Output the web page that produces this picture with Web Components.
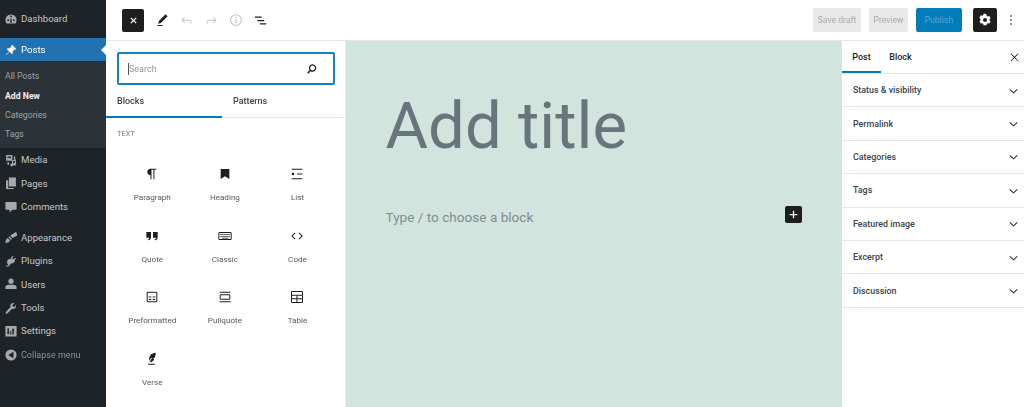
<!DOCTYPE html>
<html>
<head>
<meta charset="utf-8">
<title>Add New Post</title>
<style>
  html, body { margin: 0; padding: 0; height: 407px; overflow: hidden; background: #fff; font-family: Roboto, "Liberation Sans", sans-serif; }
</style>
</head>
<body>
<wp-editor></wp-editor>

<script>
// icons, all on a 24x24 box unless a menu icon (20x20)
const icons = {
  dashboard: '<path d="M10 3.5a8 8 0 0 0-8 8c0 1.800.6 3.500 1.600 4.800h12.800A8 8 0 0 0 18 11.500a8 8 0 0 0-8-8zM6 13a1.300 1.300 0 1 1 0-2.600A1.300 1.300 0 0 1 6 13zm2.600 2l.9-6h1l.9 6zM14 13a1.300 1.300 0 1 1 0-2.600A1.300 1.300 0 0 1 14 13zM10 7.500A1.300 1.300 0 1 1 10 4.900a1.300 1.300 0 0 1 0 2.600z" fill-rule="evenodd"/>',
  pin: '<path d="M11.500 2.500l6 6-1.200 1.200-1-.5-3 3c.5 1.500.2 3-.8 4L8 12.500 3.500 17 3 16.500 7.500 12 3.800 8.500c1-1 2.500-1.300 4-.8l3-3-.5-1z"/>',
  media: '<path d="M3 3h9v8H3zm2 2v3l2-1.500L9 8l1-1V5zM14 5h2v4h-2zM5 13h2v4H5zM13 10l4-1v7a2 2 0 1 1-1.500-1.800V11l-2.500.6v5.400a2 2 0 1 1-1.500-1.800V11z"/>',
  pages: '<path d="M7 2h10v13H7zM3 6h3v11h8v1.500H3z"/>',
  comment: '<path d="M3 3h14a1 1 0 0 1 1 1v9a1 1 0 0 1-1 1h-5l-4 4v-4H3a1 1 0 0 1-1-1V4a1 1 0 0 1 1-1z"/>',
  appearance: '<path d="M17.500 2.500l1.500 5.500-7 3.500-3-3.500zM7.800 8.800l3.400 3.700-1.400 1.700-3.600-3.800zM5.200 11.500l3.600 3.800C7 17.500 4.500 18.500 1.500 18.500c1.200-1.500 1-3.500 1.700-5z"/>',
  plugins: '<path d="M12 2.500l1.500 1-2 3 2 1.500 2.300-2.800 1.400 1.100-2.400 3 1 .8c-1 2.500-3.400 4-6 3.500L8 16c-.500 1-1.200 2-3.500 2H3v-1.500h1.500c1 0 1.500-.5 2-1.500l-2-1.500C4 10.500 5 8 7.500 6.800l1.300 1z"/>',
  users: '<circle cx="10" cy="6" r="3.700"/><path d="M2 17v-2.500c0-2 2-3.500 4.500-3.500h7c2.500 0 4.500 1.500 4.500 3.500V17z"/>',
  tools: '<path d="M17.500 5.500l-3 3-2-.5-.5-2 3-3c-2.500-.8-5 .2-5.700 2.700-.3 1-.2 1.900.1 2.700L3 15.500c-.8.800-.8 1.700-.2 2.300.6.600 1.500.6 2.300-.2l6.500-6.500c.8.300 1.700.4 2.700.1 2.500-.7 3.500-3.200 2.700-5.700z"/>',
  settings: '<path d="M2 3h16v15H2zm3 3v6H3.800l2.200 3 2.200-3H7V6zm8 0l-2.200 3H12v6h2V9h1.200zM9 10v5h1.500v-5z" fill-rule="evenodd"/>',
  collapse: '<path d="M10 2a8 8 0 1 0 0 16 8 8 0 0 0 0-16zm3.500 3.500v9L6 10z" fill-rule="evenodd"/>',
  close: '<path d="M13 11.800l6.100-6.100-1.100-1.100-6 6.100-6.100-6.100-1 1.100 6 6.100-6 6 1 1.100 6.100-6.100 6 6.100 1.100-1.100z"/>',
  closebold: '<path d="M14.300 12l6-6L18 3.700l-6 6-6-6L3.700 6l6 6-6 6L6 20.300l6-6 6 6 2.300-2.300z"/>',
  pencil: '<path d="M20.100 5.100L16.900 2 6.200 12.700l-1.300 4.400 4.500-1.300L20.100 5.100zM4 20.800h8v-1.500H4v1.500z"/>',
  undo: '<path d="M18.300 11.700c-.6-.6-1.400-.9-2.300-.9H6.700l2.900-3.300-1.100-1-4.500 5 4.500 5 1.100-1-2.900-3.300H16c.5 0 .9.200 1.300.5.900.9 1 1.800 1 2.700v1.800h1.500v-1.800c0-1.200-.3-2.600-1.500-3.700z"/>',
  redo: '<path d="M15.600 6.500l-1.100 1 2.900 3.300H8c-.9 0-1.700.3-2.300.9-1.200 1.100-1.500 2.500-1.500 3.700v1.800h1.500v-1.800c0-.9.100-1.800 1-2.700.4-.3.800-.5 1.300-.5h9.400l-2.900 3.300 1.100 1 4.500-5z"/>',
  info: '<path d="M12 3.200c-4.800 0-8.800 3.900-8.800 8.800 0 4.800 3.900 8.800 8.800 8.800 4.800 0 8.800-3.900 8.800-8.800 0-4.800-4-8.800-8.800-8.800zm0 16c-4 0-7.200-3.300-7.200-7.200C4.800 8 8 4.800 12 4.800s7.200 3.300 7.200 7.200c0 4-3.200 7.200-7.200 7.200zM11 17h2v-6h-2zm0-8h2V7h-2z"/>',
  listview: '<path d="M3 5.500h11v2H3zM7 11h11v2H7zM11 16.500h10v2H11z"/>',
  search: '<path d="M14 4a7 7 0 0 0-5.600 11.200L4 19.600 5.900 21.500l4.500-4.400A7 7 0 1 0 14 4zm0 2.500a4.500 4.500 0 1 1 0 9 4.500 4.500 0 0 1 0-9z" fill-rule="evenodd"/>',
  gear: '<path d="M12 2.500l2.200 1 .5 2.300 1.400.8 2.300-.7 2 3.300-1.700 1.600v1.600l1.700 1.600-2 3.400-2.300-.7-1.400.8-.5 2.300h-4.400l-.5-2.300-1.400-.8-2.300.7-2-3.400 1.700-1.600v-1.600L3.600 8.200l2-3.300 2.300.7 1.400-.8.500-2.300zM12 9a3 3 0 1 0 0 6 3 3 0 0 0 0-6z" fill-rule="evenodd"/>',
  dots: '<path d="M13 19h-2v-2h2v2zm0-6h-2v-2h2v2zm0-6h-2V5h2v2z"/>',
  plus: '<path d="M18 11h-5V6h-2v5H6v2h5v5h2v-5h5z"/>',
  chevron: '<path d="M17.500 9.500L12 14.600 6.500 9.500l-1 1.100L12 16.700l6.500-6.100z"/>',
  paragraph: '<path d="M18.300 4H9.900v-.1l-.9.2c-2.300.4-4 2.400-4 4.800s1.700 4.400 4 4.800l.7.100V20h1.500V5.500h2.900V20h1.500V5.500h2.700V4z"/>',
  heading: '<path d="M5.500 4.500h13v15L12 15.500l-6.500 4z"/>',
  list: '<path d="M4 4v1.500h16V4H4zm8 8.800h8v-1.500h-8v1.500zM4 20h16v-1.500H4V20zm0-8a2 2 0 1 0 4 0 2 2 0 1 0-4 0z"/>',
  quote: '<path d="M3.500 6h7v7.500c0 2.800-1.400 4.500-3.800 5l-.7-1.500c1.300-.4 2-1.200 2-2.500h-4.500zM13.500 6h7v7.500c0 2.800-1.400 4.500-3.800 5l-.7-1.500c1.300-.4 2-1.200 2-2.500h-4.500z"/>',
  classic: '<path d="M20 6H4c-1.100 0-2 .9-2 2v8c0 1.100.9 2 2 2h16c1.100 0 2-.9 2-2V8c0-1.100-.9-2-2-2zm.5 10a.5.500 0 0 1-.5.5H4a.5.500 0 0 1-.5-.5V8c0-.3.200-.5.500-.5h16c.3 0 .5.200.5.500zM5 9h2v1.500H5zm3 0h2v1.500H8zm3 0h2v1.500h-2zm3 0h2v1.500h-2zm3 0h2v1.500h-2zM5 12h2v1.500H5zm3 0h2v1.500H8zm3 0h2v1.500h-2zm3 0h2v1.500h-2zm3 0h2v1.500h-2zM7 14.800h10v1H7z" fill-rule="evenodd"/>',
  code: '<path d="M20.800 12l-5.500-5.200-1 1.100 4.300 4.100-4.300 4.100 1 1.100zM3.200 12l5.500 5.200 1-1.100L5.400 12l4.300-4.100-1-1.100z"/>',
  preformatted: '<path d="M18 4H6a2 2 0 0 0-2 2v12a2 2 0 0 0 2 2h12a2 2 0 0 0 2-2V6a2 2 0 0 0-2-2zm.5 14a.5.500 0 0 1-.5.5H6a.5.500 0 0 1-.5-.5V6c0-.3.200-.5.500-.5h12c.3 0 .5.200.5.500zM7 16.500h4V15H7zm6 0h4V15h-4zM7 12.800h4v-1.500H7zm6 0h4v-1.500h-4z" fill-rule="evenodd"/>',
  pullquote: '<path d="M4 4h16v1.500H4zM4 18.500h16V20H4zM18 8H6c-1.100 0-2 .9-2 2v4c0 1.100.9 2 2 2h12c1.100 0 2-.9 2-2v-4c0-1.100-.9-2-2-2zm.5 6c0 .3-.200.5-.5.5H6a.5.500 0 0 1-.5-.5v-4c0-.3.200-.5.500-.5h12c.3 0 .5.200.5.500z" fill-rule="evenodd"/>',
  table: '<path d="M19 3H5a2 2 0 0 0-2 2v14a2 2 0 0 0 2 2h14a2 2 0 0 0 2-2V5a2 2 0 0 0-2-2zM5 4.500h14c.3 0 .5.200.5.500v3.500h-15V5c0-.3.200-.5.500-.5zm6.200 15H5a.5.500 0 0 1-.5-.5v-3.500h6.700zm0-5.500H4.500v-4h6.700zm8.300 5c0 .3-.200.500-.5.500h-6.300v-4h6.800zm0-5h-6.800v-4h6.800z" fill-rule="evenodd"/>',
  verse: '<path d="M17.800 2.500c-3.500 0-8 1.500-9.500 6-.8 2.400-.6 4.700-.3 6.300L11 10l1 .6-3.700 6.100h1.200c3.500-.5 5.200-2.300 5.800-4.600l-2.300-.3 3-1.600c.8-2 1.500-4.500 1.800-7.700zM6 19h10v1.500H6z"/>'
};
const svg = (name, size, box = 24) => `<svg width="${size}" height="${size}" viewBox="0 0 ${box} ${box}" fill="currentColor" aria-hidden="true">${icons[name]}</svg>`;

class WpMenuItem extends HTMLElement {
  constructor() {
    super();
    this.attachShadow({ mode: 'open' }).innerHTML = `
      <style>
        :host { display: flex; align-items: center; height: 23.4px; color: #c4c8cb; font-size: 9.6px; }
        :host([kind=current]) { background: #2271b1; color: #fff; position: relative; }
        :host([kind=current])::after { content: ''; position: absolute; right: 0; top: 7px; border: 5px solid transparent; border-right-color: #fff; border-left: 0; }
        :host([kind=collapse]) { color: #8d9398; font-size: 9px; }
        span { width: 21px; padding-left: 1px; box-sizing: border-box; display: flex; justify-content: center; }
        svg { display: block; color: #a7aaad; }
        :host([kind=current]) svg { color: #fff; }
      </style>
      <span>${svg(this.getAttribute('icon'), 14, 20)}</span><slot></slot>`;
  }
}

class WpAdminMenu extends HTMLElement {
  constructor() {
    super();
    this.attachShadow({ mode: 'open' }).innerHTML = `
      <style>
        :host { display: block; width: 106px; background: #1d2327; font-family: Roboto, "Liberation Sans", sans-serif; }
        .top { padding-top: 7px; height: 31px; }
        .sub { background: #2c3338; padding: 6px 0 4px; display: flex; flex-direction: column; }
        .sub a { display: block; height: 19.2px; line-height: 18px; padding-left: 5px; font-size: 8.7px; color: #9ea3a8; }
        .sub a.on { color: #f0f0f1; font-weight: 700; }
        .gap { height: 7.4px; }
        .end { margin-top: 0.6px; }
      </style>
      <div class="top"><wp-menu-item icon="dashboard">Dashboard</wp-menu-item></div>
      <wp-menu-item icon="pin" kind="current">Posts</wp-menu-item>
      <div class="sub"><a>All Posts</a><a class="on">Add New</a><a>Categories</a><a>Tags</a></div>
      <wp-menu-item icon="media">Media</wp-menu-item>
      <wp-menu-item icon="pages">Pages</wp-menu-item>
      <wp-menu-item icon="comment">Comments</wp-menu-item>
      <div class="gap"></div>
      <wp-menu-item icon="appearance">Appearance</wp-menu-item>
      <wp-menu-item icon="plugins">Plugins</wp-menu-item>
      <wp-menu-item icon="users">Users</wp-menu-item>
      <wp-menu-item icon="tools">Tools</wp-menu-item>
      <wp-menu-item icon="settings">Settings</wp-menu-item>
      <wp-menu-item class="end" icon="collapse" kind="collapse">Collapse menu</wp-menu-item>`;
  }
}

class WpToolbar extends HTMLElement {
  constructor() {
    super();
    this.attachShadow({ mode: 'open' }).innerHTML = `
      <style>
        :host { display: flex; align-items: center; height: 40px; border-bottom: 1px solid #e6e6e6; padding: 0 0 0 16px; font-size: 8.6px; }
        .btn { display: flex; align-items: center; justify-content: center; }
        .black { background: #1e1e1e; color: #fff; border-radius: 2px; }
        .left { display: flex; align-items: center; }
        .tool { width: 24.5px; height: 24px; color: #1e1e1e; }
        .tool.off { color: #c4c4c4; }
        .grow { flex: 1; }
        .txt { height: 24px; border-radius: 2px; background: #e9e9e9; color: #a8a8a8; }
        .pub { background: #007cba; color: #64a6d0; width: 46px; margin: 0 11px 0 8px; }
      </style>
      <div class="left">
        <div class="btn black" style="width:22px;height:23px;margin-right:6px">${svg('closebold', 9)}</div>
        <div class="btn tool">${svg('pencil', 15)}</div>
        <div class="btn tool off">${svg('undo', 15)}</div>
        <div class="btn tool off">${svg('redo', 15)}</div>
        <div class="btn tool off">${svg('info', 16)}</div>
        <div class="btn tool">${svg('listview', 15)}</div>
      </div>
      <div class="grow"></div>
      <div class="btn txt" style="width:48px;margin-right:8px">Save draft</div>
      <div class="btn txt" style="width:39px">Preview</div>
      <div class="btn txt pub">Publish</div>
      <div class="btn black" style="width:24px;height:24px">${svg('gear', 16)}</div>
      <div class="btn tool" style="width:27px">${svg('dots', 16)}</div>`;
  }
}

class BlockTile extends HTMLElement {
  constructor() {
    super();
    this.attachShadow({ mode: 'open' }).innerHTML = `
      <style>
        :host { display: flex; flex-direction: column; align-items: center; height: 61.7px; color: #1e1e1e; }
        svg { display: block; height: 16px; width: 16px; margin-bottom: 10px; }
        div { font-size: 8.1px; color: #50575e; line-height: 11px; }
      </style>
      ${svg(this.getAttribute('icon'), 16)}<div><slot></slot></div>`;
  }
}

class BlockInserter extends HTMLElement {
  constructor() {
    super();
    this.attachShadow({ mode: 'open' }).innerHTML = `
      <style>
        :host { display: block; width: 239px; border-right: 1px solid #e6e6e6; background: #fff; overflow: hidden; }
        .search { margin: 11px 10px 0 11px; height: 33px; box-sizing: border-box; border: 2px solid #0f84c0; border-radius: 2px; display: flex; align-items: center; justify-content: space-between; padding: 0 15px 0 9px; font-size: 9px; color: #8f9498; }
        .search span { border-left: 1px solid #555; line-height: 12px; }
        .search svg { display: block; color: #1e1e1e; }
        .tabs { display: flex; height: 33px; box-sizing: border-box; border-bottom: 1px solid #e6e6e6; font-size: 9px; font-weight: 500; color: #3c434a; }
        .tabs div { width: 116px; line-height: 32px; box-sizing: border-box; }
        .tabs .on { padding-left: 11px; border-bottom: 2px solid #007cba; height: 33px; }
        .tabs .off { padding-left: 11px; }
        .head { font-size: 7.5px; color: #6c7781; padding: 11px 0 0 11px; height: 35px; box-sizing: border-box; line-height: 10px; }
        .grid { display: grid; grid-template-columns: repeat(3, 72.6px); padding: 13px 0 0 10px; }
      </style>
      <div class="search"><span>Search</span>${svg('search', 13)}</div>
      <div class="tabs"><div class="on">Blocks</div><div class="off">Patterns</div></div>
      <div class="head">TEXT</div>
      <div class="grid">
        <block-tile icon="paragraph">Paragraph</block-tile>
        <block-tile icon="heading">Heading</block-tile>
        <block-tile icon="list">List</block-tile>
        <block-tile icon="quote">Quote</block-tile>
        <block-tile icon="classic">Classic</block-tile>
        <block-tile icon="code">Code</block-tile>
        <block-tile icon="preformatted">Preformatted</block-tile>
        <block-tile icon="pullquote">Pullquote</block-tile>
        <block-tile icon="table">Table</block-tile>
        <block-tile icon="verse">Verse</block-tile>
      </div>`;
  }
}

class EditorCanvas extends HTMLElement {
  constructor() {
    super();
    this.attachShadow({ mode: 'open' }).innerHTML = `
      <style>
        :host { display: block; flex: 1; background: #d1e4dd; padding: 43px 40px 0 39.5px; box-sizing: border-box; min-width: 0; }
        h1 { margin: 0; font-size: 65.3px; font-weight: 400; line-height: 84px; color: #69757c; }
        .row { display: flex; justify-content: space-between; margin-top: 39px; }
        p { margin: 0; font-size: 13.6px; line-height: 20px; color: #7f8e92; }
        .plus { width: 17px; height: 17px; background: #1e1e1e; color: #fff; border-radius: 2px; display: flex; align-items: center; justify-content: center; margin-top: -1px; }
        .plus svg { display: block; }
      </style>
      <h1>Add title</h1>
      <div class="row"><p>Type / to choose a block</p><div class="plus">${svg('plus', 15)}</div></div>`;
  }
}

class SettingsPanel extends HTMLElement {
  constructor() {
    super();
    this.attachShadow({ mode: 'open' }).innerHTML = `
      <style>
        :host { display: flex; align-items: center; justify-content: space-between; height: 33.4px; box-sizing: border-box; border-bottom: 1px solid #e6e6e6; padding: 0 3px 0 11px; font-size: 8.9px; font-weight: 500; color: #3c434a; }
        svg { display: block; color: #1e1e1e; }
      </style>
      <slot></slot>${svg('chevron', 15)}`;
  }
}

class SettingsSidebar extends HTMLElement {
  constructor() {
    super();
    this.attachShadow({ mode: 'open' }).innerHTML = `
      <style>
        :host { display: block; width: 182px; background: #fff; }
        .tabs { display: flex; align-items: center; height: 33px; box-sizing: border-box; border-bottom: 1px solid #e6e6e6; font-size: 9px; font-weight: 500; color: #1e1e1e; }
        .tab { width: 39px; height: 32px; line-height: 32px; text-align: center; }
        .tab.on { box-shadow: inset 0 -2px 0 #007cba; }
        .tabs svg { display: block; margin-left: auto; margin-right: 3px; color: #1e1e1e; }
      </style>
      <div class="tabs"><div class="tab on">Post</div><div class="tab">Block</div>${svg('close', 13)}</div>
      <settings-panel>Status &amp; visibility</settings-panel>
      <settings-panel>Permalink</settings-panel>
      <settings-panel>Categories</settings-panel>
      <settings-panel>Tags</settings-panel>
      <settings-panel>Featured image</settings-panel>
      <settings-panel>Excerpt</settings-panel>
      <settings-panel>Discussion</settings-panel>`;
  }
}

class WpEditor extends HTMLElement {
  constructor() {
    super();
    this.attachShadow({ mode: 'open' }).innerHTML = `
      <style>
        :host { display: flex; height: 407px; overflow: hidden; font-family: Roboto, "Liberation Sans", sans-serif; filter: blur(0.35px); }
        .main { flex: 1; display: flex; flex-direction: column; min-width: 0; }
        .body { flex: 1; display: flex; min-height: 0; }
      </style>
      <wp-admin-menu></wp-admin-menu>
      <div class="main">
        <wp-toolbar></wp-toolbar>
        <div class="body">
          <block-inserter></block-inserter>
          <editor-canvas></editor-canvas>
          <settings-sidebar></settings-sidebar>
        </div>
      </div>`;
  }
}

customElements.define('wp-menu-item', WpMenuItem);
customElements.define('wp-admin-menu', WpAdminMenu);
customElements.define('wp-toolbar', WpToolbar);
customElements.define('block-tile', BlockTile);
customElements.define('block-inserter', BlockInserter);
customElements.define('editor-canvas', EditorCanvas);
customElements.define('settings-panel', SettingsPanel);
customElements.define('settings-sidebar', SettingsSidebar);
customElements.define('wp-editor', WpEditor);
</script>
</body>
</html>
